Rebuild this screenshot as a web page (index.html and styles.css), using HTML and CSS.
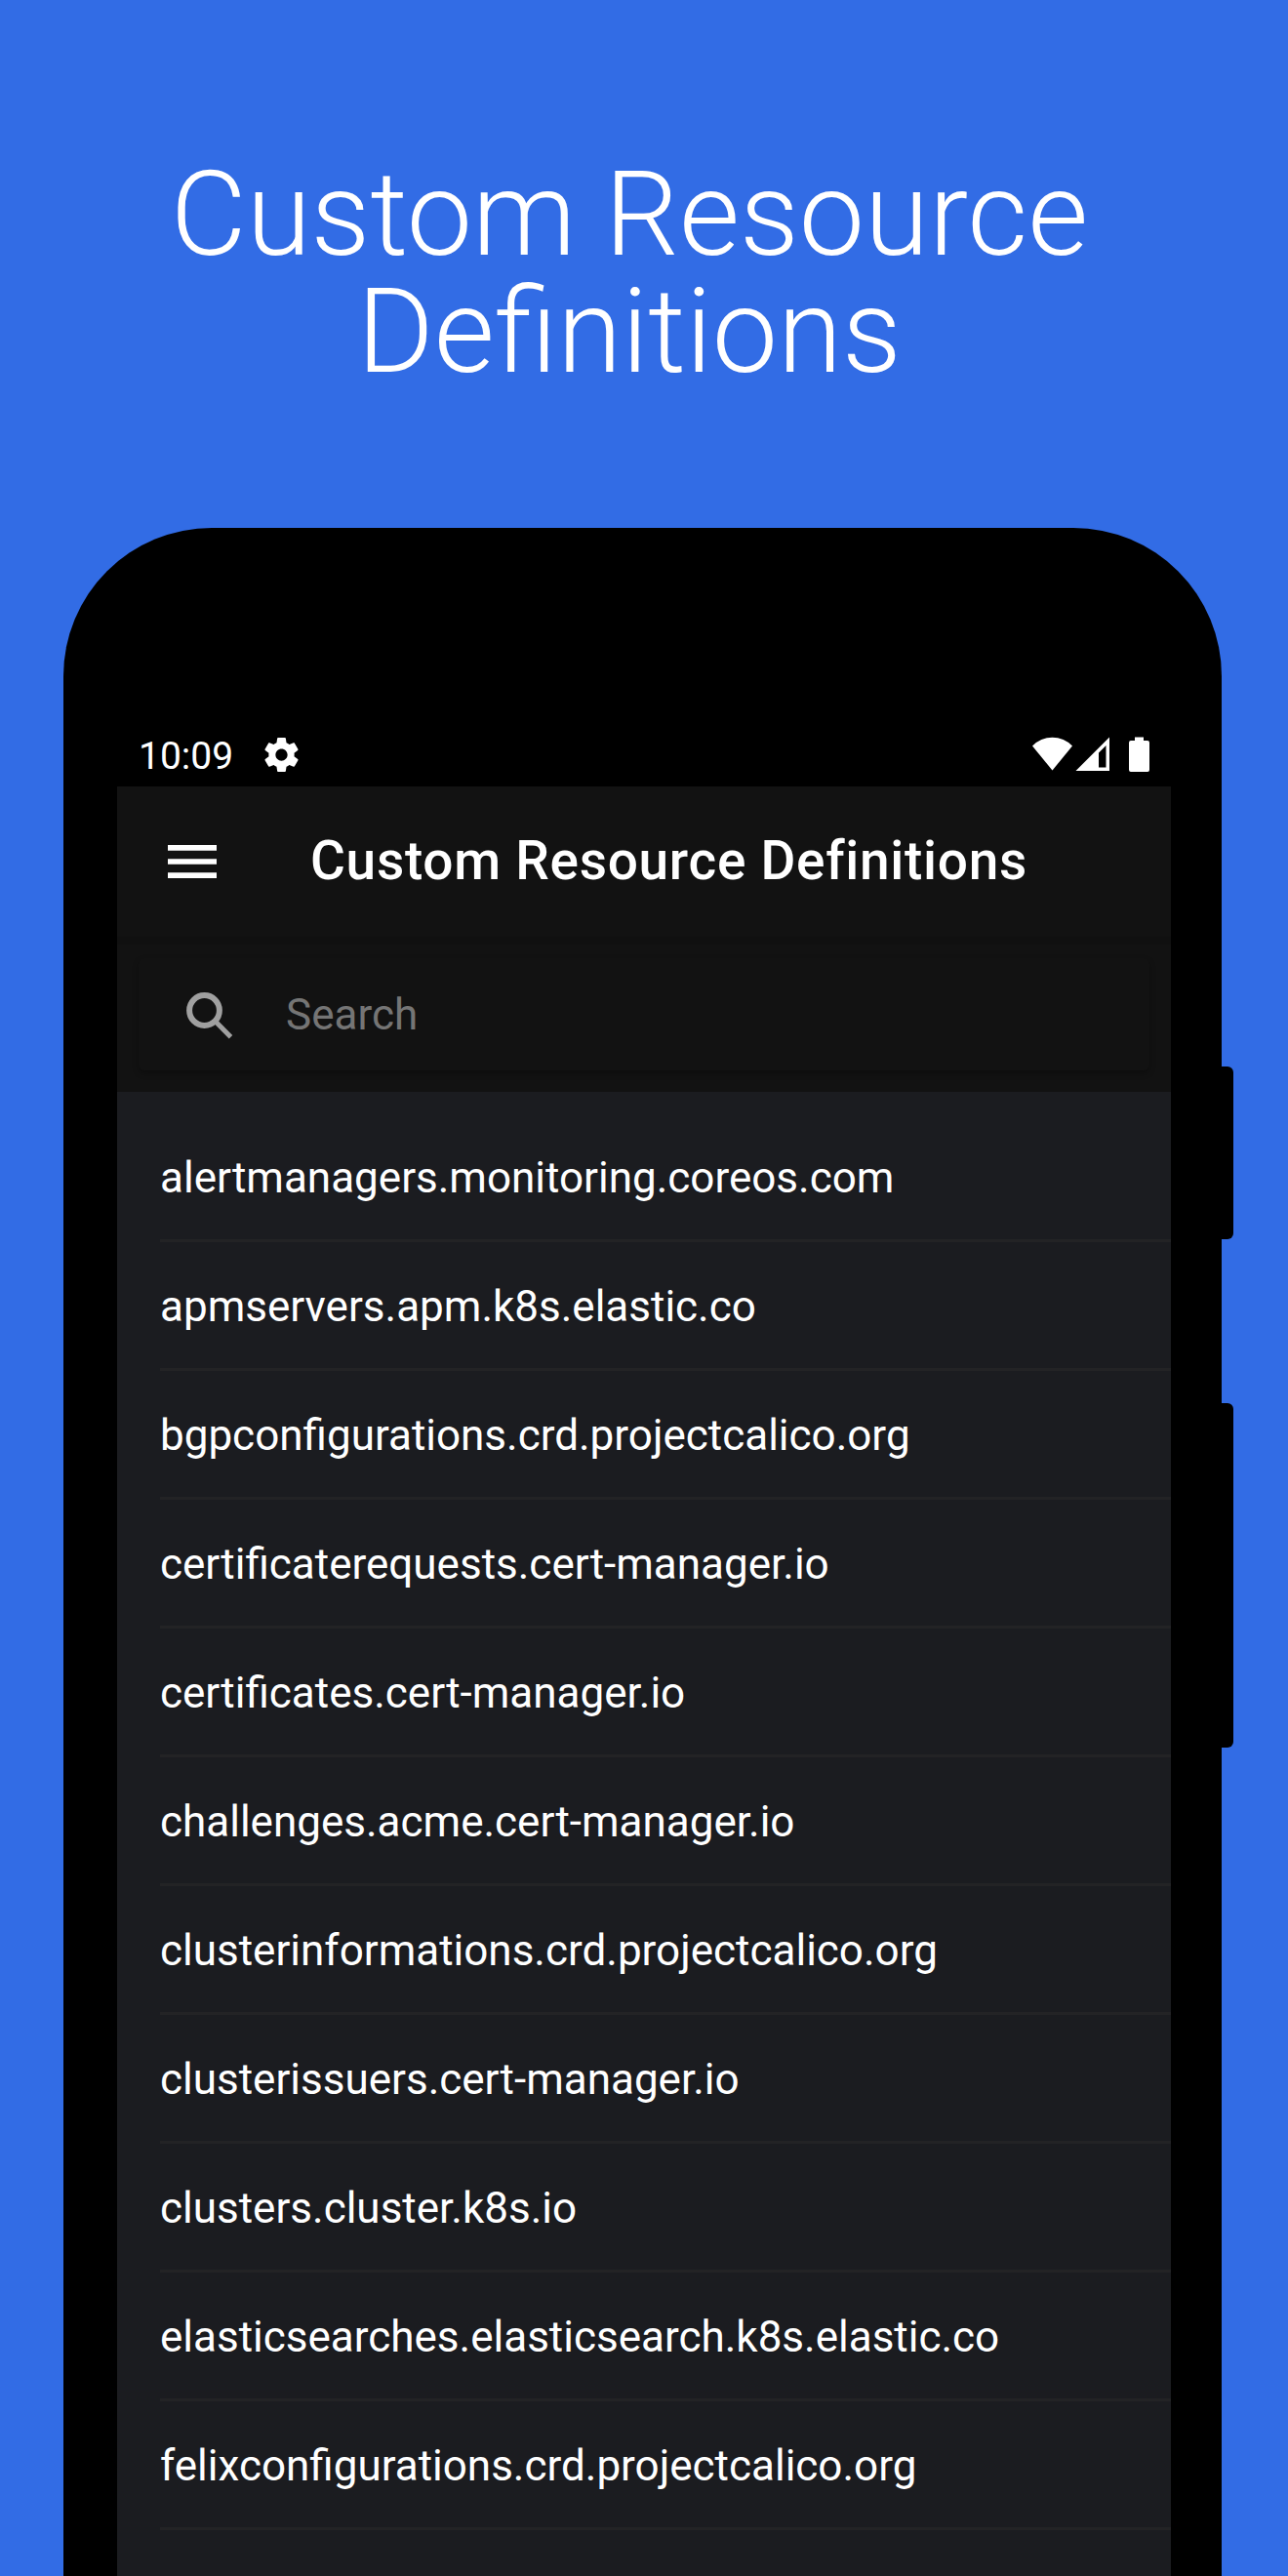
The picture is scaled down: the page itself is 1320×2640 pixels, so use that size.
FILE: index.html
```html
<!DOCTYPE html>
<html lang="en">
<head>
<meta charset="utf-8">
<title>Custom Resource Definitions</title>
<link rel="stylesheet" href="styles.css">
</head>
<body>
<h1 class="headline">Custom Resource<br>Definitions</h1>
<main class="phone">
  <span class="side-button power"></span>
  <span class="side-button volume"></span>
  <div class="status-bar">
    <span class="clock">10:09</span>
    <svg class="gear" viewBox="2 2 20 20"><path d="M19.43 12.98c.04-.32.07-.64.07-.98s-.03-.66-.07-.98l2.11-1.65c.19-.15.24-.42.12-.64l-2-3.46c-.12-.22-.39-.3-.61-.22l-2.490 1c-.52-.4-1.080-.73-1.690-.98l-.38-2.650C14.460 2.180 14.250 2 14 2h-4c-.25 0-.46.18-.49.42l-.38 2.650c-.61.25-1.170.59-1.690.98l-2.490-1c-.23-.09-.49 0-.61.22l-2 3.460c-.13.22-.07.49.12.64l2.110 1.650c-.04.32-.07.65-.07.98s.03.66.07.98l-2.110 1.650c-.19.15-.24.42-.12.64l2 3.460c.12.22.39.3.61.22l2.490-1c.52.4 1.080.73 1.690.98l.38 2.650c.03.24.24.42.49.42h4c.25 0 .46-.18.49-.42l.38-2.650c.61-.25 1.170-.59 1.690-.98l2.490 1c.23.09.49 0 .61-.22l2-3.460c.12-.22.07-.49-.12-.64l-2.110-1.650zM12 15.500c-1.930 0-3.500-1.570-3.500-3.500s1.570-3.500 3.500-3.500 3.500 1.570 3.500 3.500-1.570 3.500-3.500 3.500z"/></svg>
    <svg class="signals" viewBox="0 0 120 38">
      <path d="M0 9.600A28 28 0 0 1 41 9.600L20.500 34.500z"/>
      <path fill-rule="evenodd" d="M79 .5V35H44.500zM75.500 9L68 16.500V31.500H75.500z"/>
      <path d="M105 .5h9V4h4a2 2 0 0 1 2 2v28a2 2 0 0 1-2 2h-17a2 2 0 0 1-2-2V6a2 2 0 0 1 2-2h4z"/>
    </svg>
  </div>
  <section class="screen">
    <header class="toolbar">
      <svg class="menu" viewBox="0 0 50 34"><path d="M0 0h50v5.800H0zM0 14.200h50v5.600H0zM0 28.200h50V34H0z"/></svg>
      <h2 class="title">Custom Resource Definitions</h2>
    </header>
    <div class="search-wrap"><div class="search">
      <svg class="magnifier" viewBox="0 0 48 48"><circle cx="18.500" cy="18.500" r="15.400"/><path d="M28.500 28.500L45.500 45.700"/></svg>
      <span>Search</span></div></div>
    <ul class="list">
      <li>alertmanagers.monitoring.coreos.com</li>
      <li>apmservers.apm.k8s.elastic.co</li>
      <li>bgpconfigurations.crd.projectcalico.org</li>
      <li>certificaterequests.cert-manager.io</li>
      <li>certificates.cert-manager.io</li>
      <li>challenges.acme.cert-manager.io</li>
      <li>clusterinformations.crd.projectcalico.org</li>
      <li>clusterissuers.cert-manager.io</li>
      <li>clusters.cluster.k8s.io</li>
      <li>elasticsearches.elasticsearch.k8s.elastic.co</li>
      <li>felixconfigurations.crd.projectcalico.org</li>
    </ul>
  </section>
</main>
</body>
</html>
```
FILE: styles.css
```css
* { box-sizing: border-box; }
body { margin: 0; height: 2640px; overflow: hidden; background: #326ce5; color: #fff; font-family: Roboto, sans-serif; display: flex; flex-direction: column; }
.headline { margin: 160px 30px 0 0; height: 381px; font-size: 120px; line-height: 120px; font-weight: 300; text-align: center; }
.phone { position: relative; width: 1187px; height: 2099px; margin-left: 65px; padding: 201px 52px 0 55px; background: #000; border-radius: 152px 152px 0 0; }
.side-button { position: absolute; left: 1187px; width: 12px; background: #000; border-radius: 0 6px 6px 0; }
.power { top: 552px; height: 177px; }
.volume { top: 897px; height: 353px; }
.status-bar { height: 64px; display: flex; align-items: center; padding: 0 22px; }
.clock { font-size: 39px; padding-top: 1px; }
.gear { width: 35px; height: 35px; margin-left: 32px; margin-bottom: 1px; fill: #fff; }
.signals { width: 120px; height: 38px; margin-left: auto; fill: #fff; }
.screen { height: 1834px; background: #1b1c20; overflow: hidden; }
.toolbar { height: 154px; background: #121212; display: flex; align-items: center; padding-left: 52px; }
.menu { width: 50px; height: 34px; fill: #fff; }
.title { margin: 0 0 2px 96px; font-size: 55px; font-weight: 500; letter-spacing: 0.7px; }
.search-wrap { height: 159px; background: #121212; border-top: 8px solid #101010; padding: 14px 22px 22px; }
.search { height: 115px; display: flex; align-items: center; padding-left: 49px; border-radius: 6px; box-shadow: 0 3px 6px rgba(0,0,0,.3); font-size: 44px; color: #757575; }
.magnifier { width: 48px; height: 48px; margin: 3px 54px 0 0; fill: none; stroke: #a0a0a0; stroke-width: 6; }
.magnifier path { stroke-width: 5; }
.list { margin: 0; padding: 22px 0 0 44px; list-style: none; }
.list li { height: 132px; display: flex; align-items: center; padding-top: 2px; border-bottom: 3px solid #232325; font-size: 44px; }
```
